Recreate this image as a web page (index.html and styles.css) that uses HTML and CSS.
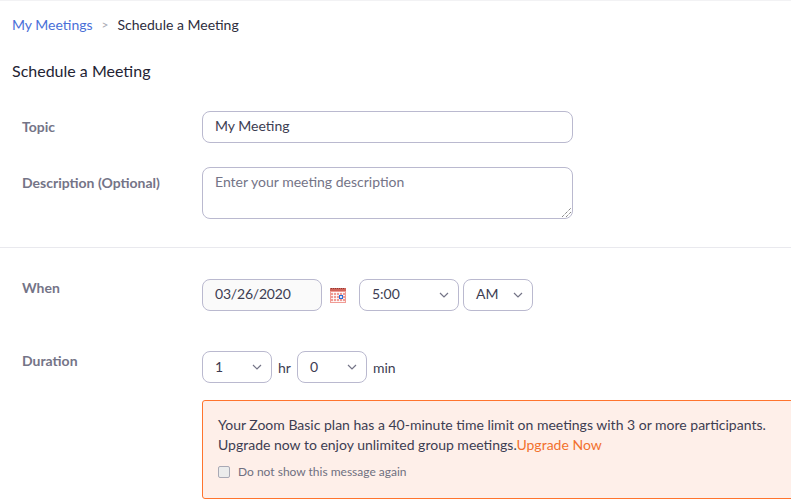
FILE: index.html
```html
<!DOCTYPE html>
<html lang="en">
<head>
<meta charset="utf-8">
<title>Schedule a Meeting</title>
<link rel="stylesheet" href="styles.css">
</head>
<body>
<nav class="crumbs"><a class="crumb-link">My Meetings</a><span class="crumb-sep">&gt;</span><span>Schedule a Meeting</span></nav>
<h1 class="title">Schedule a Meeting</h1>
<section class="group group-top">
  <div class="row row-topic">
    <label class="label">Topic</label>
    <div class="field text-input">My Meeting</div>
  </div>
  <div class="row row-desc">
    <label class="label">Description (Optional)</label>
    <div class="field textarea">Enter your meeting description
      <svg class="grip" width="9" height="9" viewBox="0 0 9 9"><path d="M0 9L9 0M4 9L9 4" stroke="#555" stroke-width="1" stroke-dasharray="1 1" fill="none"/></svg>
    </div>
  </div>
</section>
<hr class="divider">
<section class="group">
  <div class="row row-when">
    <label class="label label-when">When</label>
    <div class="controls">
      <div class="field date">03/26/2020</div>
      <svg class="cal" width="16" height="15" viewBox="0 0 16 15">
        <rect x="0" y="0" width="16" height="15" fill="#f09c95"/>
        <rect x="0" y="0" width="16" height="3" fill="#d0645a"/>
        <path d="M1 0.5h14" stroke="#8f3a33" stroke-dasharray="1 1"/>
        <path d="M1 4.5h14M1 7.5h14M1 10.5h14M1 13.5h14" stroke="#fff" opacity=".85"/>
        <path d="M3.5 4v10M6.5 4v10M9.5 4v10M12.5 4v10" stroke="#fff" opacity=".85"/>
        <rect x="9.5" y="7.5" width="3" height="3" fill="#dce8fb" stroke="#2f6fd6"/>
      </svg>
      <div class="field select sel-time">5:00<svg class="chev" width="10" height="6" viewBox="0 0 10 6"><path d="M1 1l4 4 4-4" fill="none" stroke="#747487" stroke-width="1.2"/></svg></div>
      <div class="field select sel-ampm">AM<svg class="chev" width="10" height="6" viewBox="0 0 10 6"><path d="M1 1l4 4 4-4" fill="none" stroke="#747487" stroke-width="1.2"/></svg></div>
    </div>
  </div>
  <div class="row row-duration">
    <label class="label label-duration">Duration</label>
    <div class="stack">
      <div class="controls tight">
        <div class="field select sel-num">1<svg class="chev" width="10" height="6" viewBox="0 0 10 6"><path d="M1 1l4 4 4-4" fill="none" stroke="#747487" stroke-width="1.2"/></svg></div>
        <span class="unit">hr</span>
        <div class="field select sel-num">0<svg class="chev" width="10" height="6" viewBox="0 0 10 6"><path d="M1 1l4 4 4-4" fill="none" stroke="#747487" stroke-width="1.2"/></svg></div>
        <span class="unit">min</span>
      </div>
      <div class="notice">
        <p class="notice-text">Your Zoom Basic plan has a 40-minute time limit on meetings with 3 or more participants.<br>Upgrade now to enjoy unlimited group meetings.<a class="upgrade">Upgrade Now</a></p>
        <div class="notice-check"><span class="checkbox"></span><span>Do not show this message again</span></div>
      </div>
    </div>
  </div>
</section>
</body>
</html>
```
FILE: styles.css
```css
* { box-sizing: border-box; }
html, body { margin: 0; height: 502px; overflow: hidden; }
body {
  background: #fff;
  font-family: Lato, "Open Sans", sans-serif;
  font-size: 14px;
  color: #3d3d52;
  border-top: 1px solid #f2f2f4;
}
.crumbs { display: flex; align-items: center; height: 17px; margin: 15px 0 0 12px; color: #2d2d3d; line-height: 17px; }
.crumb-link { color: #4a6fd8; }
.crumb-sep { color: #aaaab4; margin: 0 9px; font-size: 12px; }
.title { margin: 27px 0 0 12px; font-size: 16px; font-weight: 400; line-height: 22px; color: #232333; }
.group { padding-left: 22px; }
.group-top { margin-top: 29px; }
.row { display: grid; grid-template-columns: 180px auto; justify-content: start; }
.label { font-weight: 700; color: #747487; padding-top: 7px; line-height: 17px; }
.label-when { padding-top: 0; }
.label-duration { padding-top: 1px; }
.row-desc { margin-top: 24px; }
.row-when { margin-top: 31px; }
.row-duration { margin-top: 40px; }
.field {
  border: 1px solid #bab9cf;
  border-radius: 8px;
  height: 32px;
  line-height: 28px;
  color: #3d3d52;
  background: #fff;
}
.text-input { width: 371px; padding-left: 12px; }
.textarea { position: relative; width: 371px; height: 52px; padding-left: 12px; color: #747487; line-height: 28px; }
.grip { position: absolute; right: 1px; bottom: 1px; }
.divider { margin: 28px 0 0; border: 0; border-top: 1px solid #e9e9ee; }
.controls { display: flex; align-items: center; }
.date { width: 120px; padding-left: 12px; background: #fafafa; letter-spacing: -.2px; }
.cal { margin: 1px 13px 0 8px; }
.select { position: relative; padding-left: 12px; }
.chev { position: absolute; right: 9px; top: 12px; }
.sel-time { width: 100px; }
.sel-ampm { width: 70px; margin-left: 4px; }
.sel-num { width: 70px; line-height: 29px; }
.unit { margin: 0 6px; }
.stack { display: flex; flex-direction: column; }
.notice {
  width: 620px;
  height: 99px;
  margin-top: 17px;
  padding: 14px 15px 0;
  background: #feefe9;
  border: 1px solid #ff742e;
  border-radius: 3px;
  color: #3d3d52;
}
.notice-text { margin: 0; line-height: 20px; white-space: nowrap; }
.upgrade { color: #f2712e; }
.notice-check { display: flex; align-items: center; gap: 8px; margin-top: 9px; font-size: 12px; color: #6f6f80; line-height: 16px; }
.checkbox { width: 12px; height: 12px; border: 1px solid #a9a9b5; border-radius: 2px; background: #ececec; }
```
